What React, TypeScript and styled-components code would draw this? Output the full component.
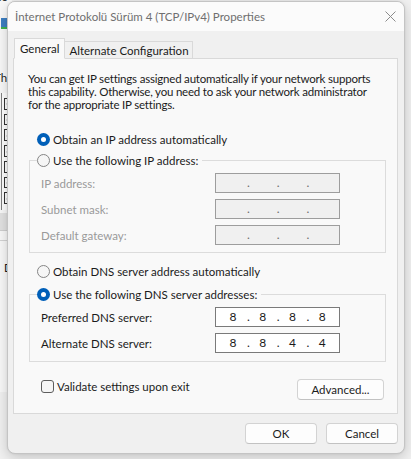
import styled, { createGlobalStyle } from 'styled-components';

const GlobalStyle = createGlobalStyle`
  html, body {
    margin: 0;
    padding: 0;
  }
  body {
    background: #f1f1f1;
    font-family: Lato, "Noto Sans", sans-serif;
    font-size: 11.5px;
    color: #1b1b1b;
  }
`;

const descriptionLines = [
  'You can get IP settings assigned automatically if your network supports',
  'this capability. Otherwise, you need to ask your network administrator',
  'for the appropriate IP settings.',
];

const ipRows = [
  { label: 'IP address:', value: ['', '', '', ''] },
  { label: 'Subnet mask:', value: ['', '', '', ''] },
  { label: 'Default gateway:', value: ['', '', '', ''] },
];

const dnsRows = [
  { label: 'Preferred DNS server:', value: ['8', '8', '8', '8'] },
  { label: 'Alternate DNS server:', value: ['8', '8', '4', '4'] },
];

const backItems = [true, true, true, true, false, true, true];

function Radio({ checked, disabled, children }: { checked?: boolean; disabled?: boolean; children: string }) {
  return (
    <RadioRow $disabled={disabled}>
      <RadioMark $checked={checked} />
      {children}
    </RadioRow>
  );
}

function IpField({ value, disabled }: { value: string[]; disabled?: boolean }) {
  return (
    <IpBox $disabled={disabled}>
      {value.map((octet, i) => (
        <Octet key={i}>
          {octet}
          {i < 3 && <Dot>.</Dot>}
        </Octet>
      ))}
    </IpBox>
  );
}

function CloseIcon() {
  return (
    <svg width="11" height="11" viewBox="0 0 11 11">
      <path d="M0.5 0.5 L10.5 10.5 M10.5 0.5 L0.5 10.5" stroke="#8b8b8b" strokeWidth="1" fill="none" />
    </svg>
  );
}

export default function App() {
  return (
    <>
      <GlobalStyle />
      <Desktop>
        <BackWindow>
          <BackCaption $top={-10}>Co</BackCaption>
          <BackAdapter />
          <BackCaption $top={42}>Th</BackCaption>
          <BackList>
            {backItems.map((on, i) => (
              <BackCheck key={i}>
                {on && (
                  <svg width="9" height="9" viewBox="0 0 9 9">
                    <path d="M1 4.5 L3.5 7 L8 1.5" stroke="#111" strokeWidth="1.4" fill="none" />
                  </svg>
                )}
              </BackCheck>
            ))}
          </BackList>
          <BackButtonBar />
          <BackDivider />
          <BackCaption $top={20} $indent={4}>D</BackCaption>
        </BackWindow>

        <Dialog>
          <TitleBar>
            <Title>İnternet Protokolü Sürüm 4 (TCP/IPv4) Properties</Title>
            <CloseButton>
              <CloseIcon />
            </CloseButton>
          </TitleBar>

          <Body>
            <TabStrip>
              <Tab $active>General</Tab>
              <Tab>Alternate Configuration</Tab>
            </TabStrip>

            <Panel>
              <Description>
                {descriptionLines.map((line) => (
                  <DescriptionLine key={line}>{line}</DescriptionLine>
                ))}
              </Description>

              <TopRadio>
                <Radio checked>Obtain an IP address automatically</Radio>
              </TopRadio>
              <Group>
                <Legend>
                  <Radio>Use the following IP address:</Radio>
                </Legend>
                {ipRows.map((row) => (
                  <FieldRow key={row.label} $disabled>
                    <span>{row.label}</span>
                    <IpField value={row.value} disabled />
                  </FieldRow>
                ))}
              </Group>

              <DnsRadio>
                <Radio>Obtain DNS server address automatically</Radio>
              </DnsRadio>
              <Group $bottom={8}>
                <Legend>
                  <Radio checked>Use the following DNS server addresses:</Radio>
                </Legend>
                {dnsRows.map((row) => (
                  <FieldRow key={row.label}>
                    <span>{row.label}</span>
                    <IpField value={row.value} />
                  </FieldRow>
                ))}
              </Group>

              <PanelFooter>
                <CheckRow>
                  <CheckBox />
                  Validate settings upon exit
                </CheckRow>
                <Button $width={87} $top={3}>Advanced...</Button>
              </PanelFooter>
            </Panel>

            <Actions>
              <Button $width={72}>OK</Button>
              <Button $width={72}>Cancel</Button>
            </Actions>
          </Body>
        </Dialog>
      </Desktop>
    </>
  );
}

const Desktop = styled.div`
  position: relative;
  width: 411px;
  height: 459px;
  overflow: hidden;
  background: #f1f1f1;
`;

const BackWindow = styled.div`
  position: absolute;
  left: 0;
  top: 0;
  width: 12px;
  height: 392px;
  background: #f9f9f9;
  display: flex;
  flex-direction: column;
  overflow: hidden;
`;

const BackCaption = styled.div<{ $top: number; $indent?: number }>`
  line-height: 14px;
  margin-top: ${(p) => p.$top}px;
  margin-left: ${(p) => p.$indent ?? -6}px;
  white-space: nowrap;
  color: #1b1b1b;
`;

const BackAdapter = styled.div`
  width: 12px;
  height: 9px;
  margin-top: 14px;
  margin-left: 1px;
  background: #3d7fc2;
  border-bottom: 2px solid #3fb34f;
`;

const BackList = styled.div`
  margin-top: 8px;
  border-left: 1px solid #828282;
  margin-left: 1px;
  padding: 5px 0 6px 2px;
  display: flex;
  flex-direction: column;
  gap: 4px;
  background: #ffffff;
  height: 117px;
  box-sizing: border-box;
`;

const BackCheck = styled.div`
  width: 13px;
  height: 13px;
  box-sizing: border-box;
  border: 1px solid #333;
  background: #fff;
  display: flex;
  align-items: center;
  justify-content: center;
`;

const BackButtonBar = styled.div`
  height: 17px;
  margin-top: 3px;
  background: #e2e2e2;
  border-bottom: 1px solid #cfcfcf;
`;

const BackDivider = styled.div`
  height: 1px;
  margin-top: 9px;
  background: #d4d4d4;
`;

const Dialog = styled.div`
  position: absolute;
  left: 7px;
  top: 1px;
  width: 398px;
  height: 453px;
  box-sizing: border-box;
  border: 1px solid #c4c4c4;
  border-radius: 8px;
  overflow: hidden;
  display: flex;
  flex-direction: column;
  background: #f0f0f0;
  box-shadow: 0 4px 14px rgba(0, 0, 0, 0.18), 0 0 2px rgba(0, 0, 0, 0.1);
`;

const TitleBar = styled.div`
  height: 29px;
  display: flex;
  align-items: center;
  justify-content: space-between;
  background: #fbfbfb;
  padding: 0 0 0 7px;
`;

const Title = styled.span`
  color: #6f6f6f;
  padding-bottom: 1px;
`;

const CloseButton = styled.div`
  width: 46px;
  height: 29px;
  display: flex;
  align-items: center;
  justify-content: center;
  padding-left: 18px;
  box-sizing: border-box;
`;

const Body = styled.div`
  flex: 1;
  display: flex;
  flex-direction: column;
  padding: 7px 6px 6px 5px;
`;

const TabStrip = styled.div`
  display: flex;
  align-items: flex-end;
  padding-left: 1px;
  position: relative;
  z-index: 1;
  margin-bottom: -1px;
`;

const Tab = styled.div<{ $active?: boolean }>`
  height: ${(p) => (p.$active ? '21px' : '18px')};
  box-sizing: border-box;
  display: flex;
  align-items: center;
  padding: ${(p) => (p.$active ? '0 5px 1px 5px' : '0 3px 0 4px')};
  border: 1px solid #d9d9d9;
  border-bottom: ${(p) => (p.$active ? '1px solid #f9f9f9' : '1px solid #d9d9d9')};
  border-left: ${(p) => (p.$active ? '1px solid #d9d9d9' : 'none')};
  background: ${(p) => (p.$active ? '#f9f9f9' : '#f0f0f0')};
  color: #1b1b1b;
  white-space: nowrap;
`;

const Panel = styled.div`
  border: 1px solid #d9d9d9;
  background: #f9f9f9;
  padding: 13px 11px 13px 14px;
  display: flex;
  flex-direction: column;
`;

const Description = styled.div`
  display: flex;
  flex-direction: column;
  letter-spacing: -0.2px;
`;

const DescriptionLine = styled.span`
  line-height: 13px;
  white-space: nowrap;
`;

const TopRadio = styled.div`
  margin-top: 20px;
  padding-left: 9px;
`;

const DnsRadio = styled.div`
  margin-top: 10px;
  padding-left: 9px;
`;

const RadioRow = styled.label<{ $disabled?: boolean }>`
  display: flex;
  align-items: center;
  gap: 3px;
  height: 16px;
  white-space: nowrap;
  color: ${(p) => (p.$disabled ? '#a0a0a0' : '#1b1b1b')};
`;

const RadioMark = styled.span<{ $checked?: boolean }>`
  width: 13px;
  height: 13px;
  border-radius: 50%;
  box-sizing: border-box;
  flex-shrink: 0;
  background: ${(p) => (p.$checked ? '#005fb8' : '#f6f6f6')};
  border: ${(p) => (p.$checked ? 'none' : '1px solid #858585')};
  display: flex;
  align-items: center;
  justify-content: center;
  &::after {
    content: '';
    display: ${(p) => (p.$checked ? 'block' : 'none')};
    width: 5px;
    height: 5px;
    border-radius: 50%;
    background: #ffffff;
  }
`;

const Group = styled.fieldset<{ $bottom?: number }>`
  margin: 5px 0 0 1px;
  padding: 5px 0 ${(p) => p.$bottom ?? 7}px 11px;
  border: 1px solid #dcdcdc;
  display: flex;
  flex-direction: column;
  gap: 6px;
  min-width: 0;
  &:last-of-type {
    margin-top: 7px;
  }
`;

const Legend = styled.legend`
  padding: 0 4px 0 0;
  margin-left: -4px;
`;

const FieldRow = styled.div<{ $disabled?: boolean }>`
  display: grid;
  grid-template-columns: 174px 125px;
  align-items: center;
  height: 20px;
  color: ${(p) => (p.$disabled ? '#9a9a9a' : '#1b1b1b')};
`;

const IpBox = styled.div<{ $disabled?: boolean }>`
  height: 20px;
  box-sizing: border-box;
  border: 1px solid ${(p) => (p.$disabled ? '#9d9d9d' : '#7a7a7a')};
  background: ${(p) => (p.$disabled ? '#f0f0f0' : '#ffffff')};
  color: ${(p) => (p.$disabled ? '#6d6d6d' : '#1b1b1b')};
  display: grid;
  grid-template-columns: repeat(4, 1fr);
  padding: 0 2px;
  line-height: 18px;
  font-size: 12px;
`;

const Octet = styled.span`
  position: relative;
  text-align: center;
`;

const Dot = styled.span`
  position: absolute;
  right: -2px;
  top: 0;
`;

const PanelFooter = styled.div`
  display: flex;
  justify-content: space-between;
  align-items: flex-start;
  margin-top: 14px;
  padding: 0 2px 0 13px;
`;

const CheckRow = styled.label`
  display: flex;
  align-items: center;
  gap: 3px;
  height: 16px;
  margin-top: 2px;
`;

const CheckBox = styled.span`
  width: 13px;
  height: 13px;
  box-sizing: border-box;
  border: 1px solid #5d5d5d;
  border-radius: 3px;
  background: #f5f5f5;
`;

const Button = styled.button<{ $width: number; $top?: number }>`
  width: ${(p) => p.$width}px;
  height: 21px;
  margin-top: ${(p) => p.$top ?? 0}px;
  box-sizing: border-box;
  border: 1px solid #d3d3d3;
  border-bottom-color: #c2c2c2;
  border-radius: 4px;
  background: #fdfdfd;
  font-family: inherit;
  font-size: 11.5px;
  color: #1b1b1b;
  padding: 0;
`;

const Actions = styled.div`
  display: flex;
  justify-content: flex-end;
  gap: 9px;
  margin-top: 9px;
`;
